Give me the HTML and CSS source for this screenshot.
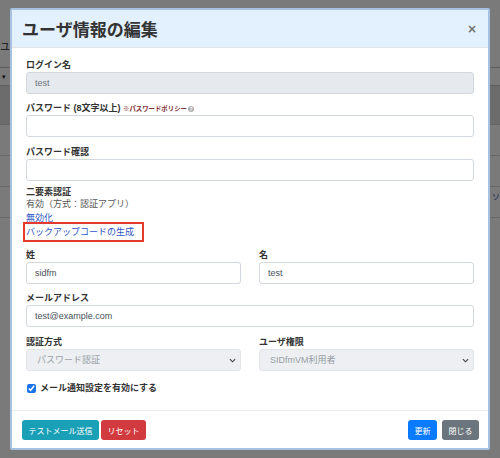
FILE: index.html
```html
<!DOCTYPE html>
<html lang="ja">
<head>
    <meta charset="UTF-8">
    <meta name="viewport" content="width=device-width, initial-scale=1.0">
    <title>ユーザ情報の編集</title>
    <link rel="stylesheet" href="styles.css">
</head>
<body>
    <div class="page">
        <div class="page-title">ユーザ一覧</div>
        <div class="toolbar"><span class="caret">▾</span></div>
        <div class="table-head"></div>
        <div class="table-row"></div>
        <div class="table-row"></div>
        <div class="table-row"><span class="row-link">ソ</span></div>
    </div>

    <div class="backdrop">
        <div class="modal">
            <div class="modal-header">
                <h5 class="modal-title">ユーザ情報の編集</h5>
                <button class="close">×</button>
            </div>
            <div class="modal-body">
                <div class="form-group">
                    <label>ログイン名</label>
                    <input class="form-control" type="text" value="test" readonly>
                </div>
                <div class="form-group">
                    <label>パスワード (8文字以上) <span class="policy">※パスワードポリシー</span><span class="help">?</span></label>
                    <input class="form-control" type="password">
                </div>
                <div class="form-group tight">
                    <label>パスワード確認</label>
                    <input class="form-control" type="password">
                </div>
                <div class="twofa">
                    <label>二要素認証</label>
                    <div class="status">有効（方式：認証アプリ）</div>
                    <a class="link" href="#">無効化</a>
                    <a class="link marked" href="#">バックアップコードの生成</a>
                </div>
                <div class="form-row">
                    <div class="form-group">
                        <label>姓</label>
                        <input class="form-control" type="text" value="sidfm">
                    </div>
                    <div class="form-group">
                        <label>名</label>
                        <input class="form-control" type="text" value="test">
                    </div>
                </div>
                <div class="form-group">
                    <label>メールアドレス</label>
                    <input class="form-control" type="text" value="test@example.com">
                </div>
                <div class="form-row">
                    <div class="form-group last">
                        <label>認証方式</label>
                        <div class="select-wrap">
                            <select class="form-control" disabled>
                                <option>パスワード認証</option>
                            </select>
                            <svg class="chevron" viewBox="0 0 8 5" width="7" height="5"><path d="M1 1l3 3 3-3" fill="none" stroke="#444" stroke-width="1.3"/></svg>
                        </div>
                    </div>
                    <div class="form-group last">
                        <label>ユーザ権限</label>
                        <div class="select-wrap">
                            <select class="form-control" disabled>
                                <option>SIDfmVM利用者</option>
                            </select>
                            <svg class="chevron" viewBox="0 0 8 5" width="7" height="5"><path d="M1 1l3 3 3-3" fill="none" stroke="#444" stroke-width="1.3"/></svg>
                        </div>
                    </div>
                </div>
                <div class="check">
                    <input type="checkbox" id="notify" checked>
                    <label for="notify">メール通知設定を有効にする</label>
                </div>
            </div>
            <div class="modal-footer">
                <div class="btn-group">
                    <button class="btn btn-info">テストメール送信</button>
                    <button class="btn btn-danger">リセット</button>
                </div>
                <div class="btn-group right">
                    <button class="btn btn-primary">更新</button>
                    <button class="btn btn-secondary">閉じる</button>
                </div>
            </div>
        </div>
    </div>
</body>
</html>
```

FILE: styles.css
```css
body{
    margin: 0;
    font-family: "Liberation Sans", "Noto Sans CJK JP", sans-serif;
    font-size: 9px;
    color: #333;
    background-color: #f4f4f4;
}
.page{
    padding-top: 40px;
}
.page-title{
    font-size: 10px;
    line-height: 14px;
    color: #222;
}
.toolbar{
    margin-top: 13px;
    height: 17px;
    border-top: 1px solid #bbb;
    border-bottom: 1px solid #bbb;
}
.caret{
    margin-left: 2px;
    font-size: 7px;
    line-height: 17px;
    color: #222;
}
.table-head{
    height: 38px;
    background-color: #d8d8d8;
    border-bottom: 1px solid #c8c8c8;
}
.table-row{
    height: 30px;
    border-bottom: 1px solid #cfcfcf;
}
.row-link{
    display: block;
    padding: 4px 0 0 492px;
    color: #1a3fa0;
    font-size: 8px;
}

.backdrop{
    position: fixed;
    top: 0;
    left: 0;
    right: 0;
    bottom: 0;
    background-color: rgba(0, 0, 0, 0.5);
}
.modal{
    width: 480px;
    margin: 8px 0 0 10px;
    box-sizing: border-box;
    background-color: white;
    border: 2px solid #a6c2de;
    border-radius: 2px;
}
.modal-header{
    height: 38px;
    box-sizing: border-box;
    display: flex;
    align-items: center;
    justify-content: space-between;
    padding: 0 10px;
    background-color: #e3f0fd;
    border-bottom: 1px solid #e2e6ea;
}
.modal-title{
    margin: 0;
    font-size: 17px;
    font-weight: bold;
    color: #333;
}
.close{
    border: none;
    background: none;
    padding: 0 1px 0 0;
    font-family: "DejaVu Sans", sans-serif;
    font-size: 12px;
    font-weight: bold;
    color: #707070;
    cursor: pointer;
}
.modal-body{
    padding: 10.5px 14px 15.5px;
}
label{
    display: block;
    font-weight: bold;
    line-height: 13px;
    color: #333;
}
.form-group{
    margin-bottom: 8.5px;
}
.form-group.tight{
    margin-bottom: 5px;
}
.form-group.last{
    margin-bottom: 11px;
}
.form-control{
    display: block;
    width: 100%;
    height: 22px;
    box-sizing: border-box;
    padding: 0 8px;
    border: 1px solid #d3d8de;
    border-radius: 3px;
    font-family: inherit;
    font-size: 9px;
    color: #495057;
    background-color: white;
}
.form-control[readonly],
.form-control[disabled]{
    background-color: #e6e9ed;
    color: #6c757d;
}
.policy{
    font-size: 6.4px;
    color: #86303a;
}
.help{
    display: inline-block;
    width: 6px;
    height: 6px;
    margin-left: 1px;
    border-radius: 50%;
    background-color: #b0b0b0;
    color: white;
    font-size: 5px;
    line-height: 6px;
    text-align: center;
    vertical-align: 0;
}
.twofa{
    margin-bottom: 6.5px;
}
.status{
    line-height: 10px;
    color: #555;
}
.link{
    display: block;
    color: #2c55c4;
    text-decoration: none;
}
.link:first-of-type{
    margin-top: 3px;
    line-height: 12px;
}
.link.marked{
    display: inline-block;
    margin: -1.5px 0 0 -3px;
    padding: 1.5px 8px 1.5px 1px;
    line-height: 13px;
    border: 2px solid #e53a2b;
}
.form-row{
    display: flex;
    gap: 18px;
}
.form-row .form-group{
    flex: 1;
}
.select-wrap{
    position: relative;
}
.select-wrap select{
    appearance: none;
    padding-left: 10px;
}
.chevron{
    position: absolute;
    right: 5px;
    top: 9px;
}
.check{
    display: flex;
    align-items: center;
    line-height: 13px;
}
.check input{
    width: 9px;
    height: 9px;
    margin: 0 4px 0 1px;
    accent-color: #1a73e8;
}
.check label{
    display: inline;
}
.modal-footer{
    display: flex;
    justify-content: space-between;
    padding: 9px 9px 8px 10px;
    border-top: 1px solid #e9ecef;
}
.btn-group{
    display: flex;
    gap: 2px;
}
.btn-group.right{
    gap: 5px;
}
.btn{
    height: 20px;
    padding: 0 6.5px;
    border: none;
    border-radius: 3px;
    font-family: inherit;
    font-size: 8px;
    color: white;
    cursor: pointer;
}
.btn-info{
    background-color: #1aa0b6;
}
.btn-danger{
    background-color: #d13a3f;
}
.btn-primary{
    background-color: #0a7bff;
}
.btn-secondary{
    background-color: #6c757d;
}
```
